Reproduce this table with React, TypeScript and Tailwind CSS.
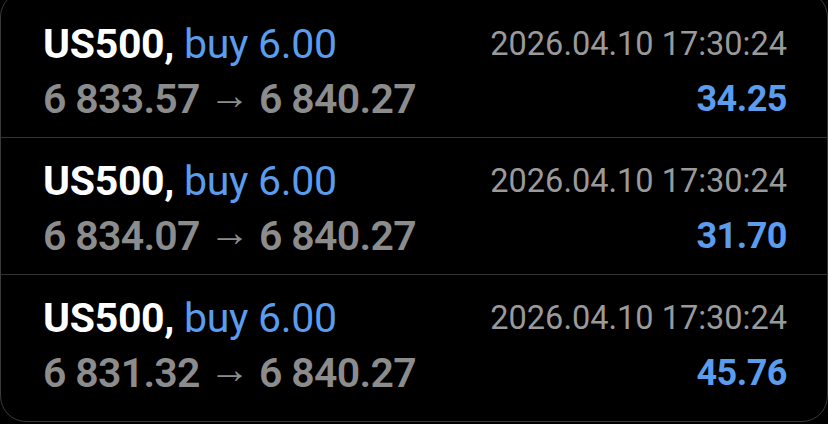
const trades = [
  { symbol: 'US500', side: 'buy', volume: '6.00', open: '6 833.57', close: '6 840.27', time: '2026.04.10 17:30:24', profit: '34.25' },
  { symbol: 'US500', side: 'buy', volume: '6.00', open: '6 834.07', close: '6 840.27', time: '2026.04.10 17:30:24', profit: '31.70' },
  { symbol: 'US500', side: 'buy', volume: '6.00', open: '6 831.32', close: '6 840.27', time: '2026.04.10 17:30:24', profit: '45.76' },
];

export default function App() {
  return (
    <main className="w-[828px] h-[424px] overflow-hidden bg-black font-['Roboto',sans-serif]">
      <div className="-mt-[9px] h-[431px] rounded-[26px] border border-[#3a3a3a] pt-[9px]">
        {trades.map((t, i) => (
          <div
            key={i}
            className={`flex items-start justify-between pl-[42px] pr-[40px] pt-[16px] h-[137px] ${
              i < trades.length - 1 ? 'border-b border-[#333]' : ''
            }`}
          >
            {/* Left: symbol + prices */}
            <div className="flex flex-col">
              <p className="text-[41px] leading-[55px] tracking-[-0.3px] whitespace-nowrap">
                <span className="text-white font-bold">{t.symbol},</span>{' '}
                <span className="text-[#5b9cec]">
                  {t.side} {t.volume}
                </span>
              </p>
              <p className="text-[41px] leading-[55px] font-semibold tracking-[-0.7px] text-[#8c8c8c] whitespace-nowrap">
                {t.open} <span className="inline-block -translate-y-[4px] font-normal">→</span> {t.close}
              </p>
            </div>

            {/* Right: time + profit */}
            <div className="flex flex-col items-end">
              <p className="text-[32.5px] leading-[55px] text-[#9a9a9a] whitespace-nowrap">{t.time}</p>
              <p className="text-[36px] leading-[55px] font-bold tracking-[-0.5px] text-[#5b9cec]">{t.profit}</p>
            </div>
          </div>
        ))}
      </div>
    </main>
  );
}
